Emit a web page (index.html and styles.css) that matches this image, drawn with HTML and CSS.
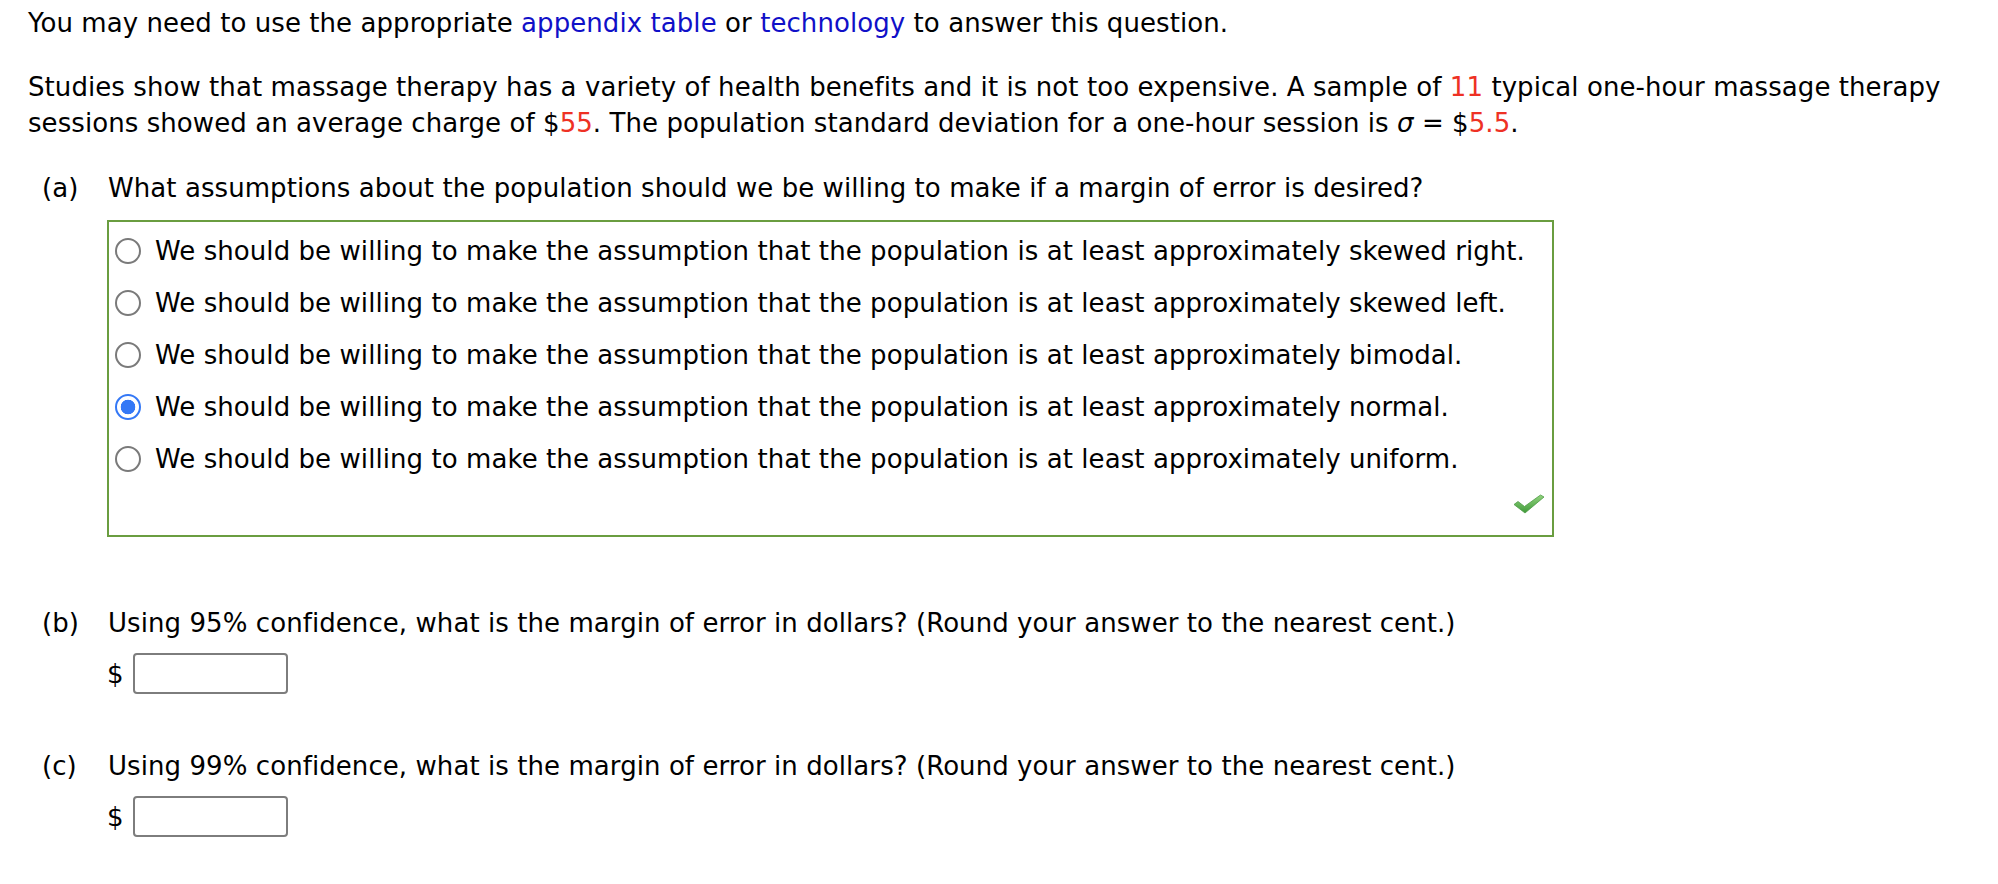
FILE: index.html
```html
<!DOCTYPE html>
<html lang="en">
<head>
<meta charset="utf-8">
<title>Massage therapy question</title>
<link rel="stylesheet" href="styles.css">
</head>
<body>
<div class="page">
  <p class="intro">You may need to use the appropriate <a class="link" href="#">appendix table</a> or <a class="link" href="#">technology</a> to answer this question.</p>
  <p class="problem">Studies show that massage therapy has a variety of health benefits and it is not too expensive. A sample of <span class="red">11</span> typical one-hour massage therapy sessions showed an average charge of $<span class="red">55</span>. The population standard deviation for a one-hour session is <i class="sym">σ</i> = $<span class="red">5.5</span>.</p>

  <div class="part part-a">
    <div class="label">(a)</div>
    <div class="body">
      <div class="question">What assumptions about the population should we be willing to make if a margin of error is desired?</div>
      <div class="choices">
        <label class="choice"><span class="radio"></span><span>We should be willing to make the assumption that the population is at least approximately skewed right.</span></label>
        <label class="choice"><span class="radio"></span><span>We should be willing to make the assumption that the population is at least approximately skewed left.</span></label>
        <label class="choice"><span class="radio"></span><span>We should be willing to make the assumption that the population is at least approximately bimodal.</span></label>
        <label class="choice"><span class="radio checked"></span><span>We should be willing to make the assumption that the population is at least approximately normal.</span></label>
        <label class="choice"><span class="radio"></span><span>We should be willing to make the assumption that the population is at least approximately uniform.</span></label>
        <div class="status">
          <svg class="check" width="32" height="20" viewBox="0 0 32 20">
            <defs>
              <linearGradient id="g" x1="0" y1="0" x2="0" y2="1">
                <stop offset="0" stop-color="#93d47e"/>
                <stop offset="1" stop-color="#3f9a3a"/>
              </linearGradient>
            </defs>
            <path d="M1 10.5 L5 7.5 L11.5 12.5 L27.5 1 L31 3 L12 19 Z" fill="url(#g)" stroke="#4d9a45" stroke-width="0.8" stroke-linejoin="round"/>
          </svg>
        </div>
      </div>
    </div>
  </div>

  <div class="part part-b">
    <div class="label">(b)</div>
    <div class="body">
      <div class="question">Using 95% confidence, what is the margin of error in dollars? (Round your answer to the nearest cent.)</div>
      <div class="answer"><span class="dollar">$</span><input class="field" type="text"></div>
    </div>
  </div>

  <div class="part part-c">
    <div class="label">(c)</div>
    <div class="body">
      <div class="question">Using 99% confidence, what is the margin of error in dollars? (Round your answer to the nearest cent.)</div>
      <div class="answer"><span class="dollar">$</span><input class="field" type="text"></div>
    </div>
  </div>
</div>
</body>
</html>
```

FILE: styles.css
```css
* { box-sizing: border-box; }
html, body { margin: 0; padding: 0; background: #ffffff; }
body {
  font-family: "DejaVu Sans", Verdana, sans-serif;
  font-size: 26px;
  line-height: 36px;
  letter-spacing: 0.07px;
  color: #000000;
}
.page {
  padding: 5px 0 0 28px;
}
p { margin: 0; }
.link { color: #1010c8; text-decoration: none; }
.problem { margin-top: 28px; width: 1950px; }
.red { color: #ee3124; }
.sym { font-style: italic; }

.part {
  display: flex;
  padding-left: 14px;
}
.label { width: 66px; flex: none; }
.body { flex: 1; }
.part-a { margin-top: 29px; }
.part-b { margin-top: 68px; }
.part-c { margin-top: 54px; }

.choices {
  margin-top: 14px;
  width: 1447px;
  border: 2px solid #6a9d40;
  padding: 3px 0 0 0;
  display: flex;
  flex-direction: column;
  margin-left: -1px;
}
.choice {
  display: flex;
  align-items: center;
  height: 52px;
  padding-left: 6px;
}
.radio {
  flex: none;
  width: 26px;
  height: 26px;
  border-radius: 50%;
  border: 2px solid #7a7a7a;
  margin-right: 14px;
  background: #fff;
}
.radio.checked {
  border: 2.5px solid #3478f6;
  background: radial-gradient(circle, #3478f6 0 7px, #ffffff 7.6px);
}
.status {
  display: flex;
  justify-content: flex-end;
  padding: 9px 7px 21px 0;
}
.check { display: block; }

.answer {
  display: flex;
  align-items: center;
  margin-top: 12px;
  margin-left: -1px;
}
.dollar { width: 26px; }
.field {
  width: 155px;
  height: 41px;
  border: 2px solid #7d7d7d;
  border-radius: 4px;
  font: inherit;
  padding: 0 6px;
  background: #fff;
}
```
